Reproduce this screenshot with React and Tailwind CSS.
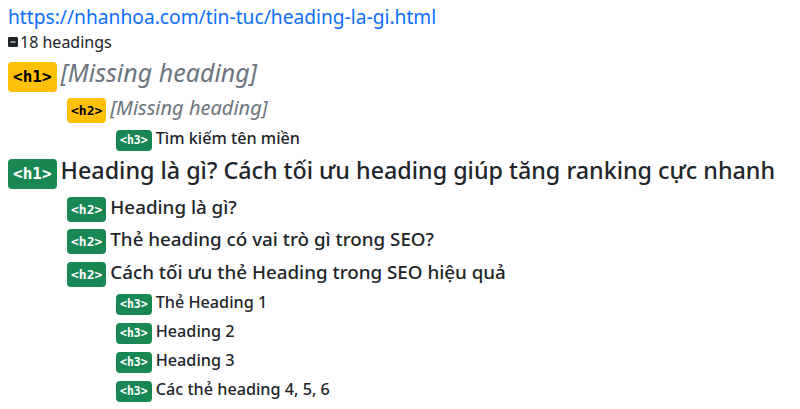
const headings = [
  { level: 1, missing: true, text: "[Missing heading]" },
  { level: 2, missing: true, text: "[Missing heading]" },
  { level: 3, text: "Tìm kiếm tên miền" },
  { level: 1, text: "Heading là gì? Cách tối ưu heading giúp tăng ranking cực nhanh" },
  { level: 2, text: "Heading là gì?" },
  { level: 2, text: "Thẻ heading có vai trò gì trong SEO?" },
  { level: 2, text: "Cách tối ưu thẻ Heading trong SEO hiệu quả" },
  { level: 3, text: "Thẻ Heading 1" },
  { level: 3, text: "Heading 2" },
  { level: 3, text: "Heading 3" },
  { level: 3, text: "Các thẻ heading 4, 5, 6" },
];

const rowStyles = {
  1: "h-[30px] mb-[7.5px]",
  2: "h-[25px] mb-[7.5px] ml-[59px]",
  3: "h-[21px] mb-[8px] ml-[108px]",
};

const textSizes = {
  1: "text-[23.3px]",
  2: "text-[18.8px]",
  3: "text-[16.2px]",
};

const missingSizes = {
  1: "text-[25px]",
  2: "text-[20px]",
  3: "text-[16px]",
};

const badgeStyles = {
  1: "h-[30px] px-[5px] text-[16px]",
  2: "h-[25px] px-[4px] text-[13px]",
  3: "h-[21px] px-[4px] text-[11.5px]",
};

function Badge({ level, missing }) {
  return (
    <span
      className={
        "mr-[4px] inline-flex shrink-0 items-center rounded-[4px] font-bold leading-none " +
        badgeStyles[level] +
        (missing ? " bg-[#ffc107] text-black" : " bg-[#198754] text-white")
      }
      style={{ fontFamily: '"DejaVu Sans Mono", "Liberation Mono", monospace' }}
    >
      {`<h${level}>`}
    </span>
  );
}

function HeadingRow({ heading }) {
  return (
    <div className={"flex items-baseline " + rowStyles[heading.level]}>
      <Badge level={heading.level} missing={heading.missing} />
      <span
        className={
          "whitespace-nowrap leading-none " +
          (heading.missing
            ? "italic text-[#6c757d] " + missingSizes[heading.level]
            : "font-medium text-[#212529] " + textSizes[heading.level])
        }
      >
        {heading.text}
      </span>
    </div>
  );
}

export default function App() {
  return (
    <div
      className="h-[409px] w-[800px] overflow-hidden bg-white px-[8px] pt-[4px] text-[#212529]"
      style={{ fontFamily: '"Noto Sans", "Open Sans", sans-serif' }}
    >
      <a href="#" className="block text-[19.2px] leading-[26px] text-[#0d6efd]">
        https://nhanhoa.com/tin-tuc/heading-la-gi.html
      </a>

      <div className="mb-[6px] flex h-[24px] items-center text-[16px]">
        <svg viewBox="0 0 16 16" className="mr-[2px] h-[10px] w-[10px]" fill="currentColor">
          <path d="M2 0a2 2 0 0 0-2 2v12a2 2 0 0 0 2 2h12a2 2 0 0 0 2-2V2a2 2 0 0 0-2-2H2zm2.5 7.25h7a.75.75 0 0 1 0 1.5h-7a.75.75 0 0 1 0-1.5z" />
        </svg>
        <span>18 headings</span>
      </div>

      {headings.map((heading, index) => (
        <HeadingRow key={index} heading={heading} />
      ))}
    </div>
  );
}
